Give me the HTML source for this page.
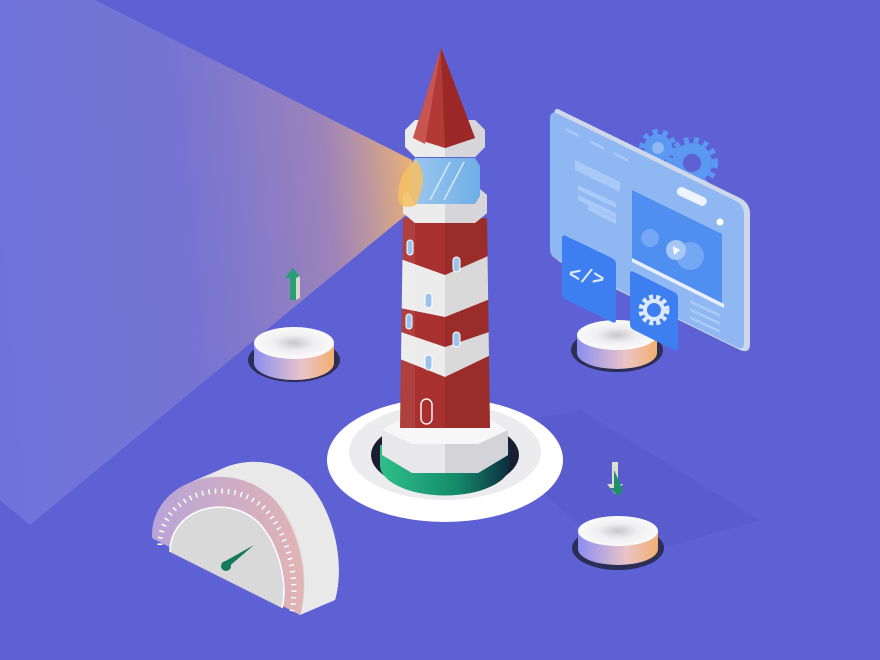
<!DOCTYPE html>
<html><head><meta charset="utf-8"><style>
html,body{margin:0;padding:0;background:#5d61d3;}
svg{display:block}
</style></head><body>
<svg width="880" height="660" viewBox="0 0 880 660" xmlns="http://www.w3.org/2000/svg">
<defs>
<linearGradient id="beam" x1="410" y1="185" x2="0" y2="220" gradientUnits="userSpaceOnUse">
<stop offset="0" stop-color="#f4b870" stop-opacity="0.9"/>
<stop offset="0.2" stop-color="#c89aa8" stop-opacity="0.6"/>
<stop offset="0.55" stop-color="#9c90d0" stop-opacity="0.4"/>
<stop offset="1" stop-color="#9a9ce8" stop-opacity="0.3"/>
</linearGradient>
<linearGradient id="btnside" x1="0" x2="1">
<stop offset="0" stop-color="#8a8ef0"/><stop offset="0.6" stop-color="#e9c4c8"/><stop offset="1" stop-color="#f3ae70"/>
</linearGradient>
<radialGradient id="btntop" cx="0.5" cy="0.5" r="0.5">
<stop offset="0" stop-color="#c8c8cc"/><stop offset="0.5" stop-color="#efeff1"/><stop offset="1" stop-color="#fafafa"/>
</radialGradient>
<linearGradient id="green" x1="0" x2="1">
<stop offset="0" stop-color="#2fbf8a"/><stop offset="0.6" stop-color="#138a68"/><stop offset="1" stop-color="#0c2b40"/>
</linearGradient>
<linearGradient id="gauge" x1="0" x2="1">
<stop offset="0" stop-color="#b8a4d8"/><stop offset="1" stop-color="#e2b4b4"/>
</linearGradient>
<linearGradient id="glass" x1="0" x2="1">
<stop offset="0" stop-color="#9cc8ef"/><stop offset="1" stop-color="#6faee6"/>
</linearGradient>
</defs>
<rect width="880" height="660" fill="#5d61d3"/>
<!-- beam -->
<polygon points="95,0 412,160 412,210 30,525 0,500 0,0" fill="url(#beam)"/>
<polygon points="470,430 580,410 760,520 620,560" fill="#5458c6" opacity="0.5"/>

<!-- left button -->
<ellipse cx="294" cy="360" rx="46" ry="22" fill="#2c2e55"/>
<path d="M254 343 v20 a40 17 0 0 0 80 0 v-20z" fill="url(#btnside)"/>
<ellipse cx="294" cy="343" rx="40" ry="16" fill="url(#btntop)"/>
<path d="M290 300 v-22 h-5 l8 -10 l8 10 h-5 v22z" fill="#2a9e78"/>
<path d="M296 300 v-22 l4 -2 v22z" fill="#d8d8c8"/>

<!-- right button (top) -->
<ellipse cx="617" cy="350" rx="46" ry="22" fill="#2c2e55"/>
<path d="M577 335 v18 a40 16 0 0 0 80 0 v-18z" fill="url(#btnside)"/>
<ellipse cx="617" cy="335" rx="40" ry="15" fill="url(#btntop)"/>

<!-- bottom right button -->
<ellipse cx="618" cy="548" rx="46" ry="22" fill="#2c2e55"/>
<path d="M578 531 v18 a40 16 0 0 0 80 0 v-18z" fill="url(#btnside)"/>
<ellipse cx="618" cy="531" rx="40" ry="15" fill="url(#btntop)"/>
<path d="M618 462 v22 h5 l-8 10 l-8 -10 h5 v-22z" fill="#dcdcd0"/>
<path d="M614 470 v18 h-4 l8 8 l5 -6 z" fill="#1f8e6a"/>

<!-- gears behind panel -->
<g fill="#5a98f2">
<circle cx="658" cy="148" r="14"/><circle cx="692" cy="163" r="20"/>
</g>
<g stroke="#5a98f2" stroke-width="6" stroke-dasharray="5 5" fill="none"><circle cx="692" cy="163" r="23"/><circle cx="658" cy="148" r="16"/></g>
<circle cx="658" cy="148" r="6" fill="#8fb8f3"/><circle cx="692" cy="163" r="9" fill="#5d61d3"/>
<!-- UI panel -->
<path d="M560 110 l180 88 q10 5 10 16 v130 q0 10 -10 6 l-180 -88 q-6 -3 -6 -12 v-134 q0 -10 6 -6z" fill="#cfd8ea"/>
<path d="M556 113 l180 88 q8 4 8 14 v128 q0 8 -8 4 l-180 -88 q-6 -3 -6 -10 v-130 q0 -8 6 -6z" fill="#8fb8f3"/>
<g fill="#a9c9f7">
<path d="M575 160 l45 22 v10 l-45 -22z"/><path d="M578 185 l38 18 v5 l-38 -18z"/><path d="M578 195 l38 18 v5 l-38 -18z"/><path d="M588 205 l28 14 v5 l-28 -14z"/>
<path d="M566 128 l12 6 v3 l-12 -6z"/><path d="M590 140 l14 7 v3 l-14 -7z"/><path d="M614 152 l14 7 v3 l-14 -7z"/>
</g>
<path d="M632 190 l90 44 v72 l-90 -44z" fill="#4f8ff0"/>
<circle cx="650" cy="238" r="9" fill="#74a7f4"/><circle cx="690" cy="256" r="14" fill="#74a7f4"/>
<circle cx="676" cy="250" r="10" fill="#a5c8f7"/><path d="M673 246 l7 4 l-6 5z" fill="#fff"/>
<path d="M632 258 l92 46 v4 l-92 -46z" fill="#e8f0fc"/>
<rect x="676" y="192" width="32" height="9" rx="4.5" fill="#eef4fe" transform="rotate(25 692 196)"/>
<circle cx="720" cy="222" r="3.5" fill="#fff"/>
<g fill="#a9c9f7"><path d="M690 300 l30 14 v3 l-30 -14z"/><path d="M690 308 l30 14 v3 l-30 -14z"/><path d="M690 316 l30 14 v3 l-30 -14z"/></g>
<path d="M566 236 l46 22 q4 2 4 6 v56 q0 4 -4 2 l-46 -22 q-4 -2 -4 -6 v-56 q0 -4 4 -2z" fill="#3d7ff0"/>
<text x="568" y="283" font-family="Liberation Mono, monospace" font-size="20" font-weight="bold" fill="#dde9fd" transform="rotate(10 588 280)">&lt;/&gt;</text>
<path d="M634 272 l40 20 q4 2 4 6 v50 q0 4 -4 2 l-40 -20 q-4 -2 -4 -6 v-50 q0 -4 4 -2z" fill="#3d7ff0"/>
<circle cx="654" cy="310" r="13" fill="none" stroke="#dde9fd" stroke-width="5" stroke-dasharray="4 3"/>
<circle cx="654" cy="310" r="9" fill="none" stroke="#dde9fd" stroke-width="4"/>

<!-- lighthouse base disc -->
<ellipse cx="445" cy="460" rx="118" ry="62" fill="#ffffff"/>
<ellipse cx="445" cy="452" rx="96" ry="48" fill="#ececef"/>
<ellipse cx="445" cy="455" rx="74" ry="36" fill="#1b1d33"/>
<path d="M380 445 v20 a64 30 0 0 0 130 0 v-20z" fill="url(#green)"/>
<path d="M382 430 l30 -18 h66 l30 18 v25 l-30 18 h-66 l-30 -18z" fill="#e8e8ea"/>
<path d="M445 412 h33 l30 18 v25 l-30 18 h-33z" fill="#d4d4d8"/>
<path d="M382 430 l30 -18 h66 l30 18 l-30 14 h-66z" fill="#f7f7f7"/>
<!-- tower -->
<clipPath id="tw"><path d="M403 218 h84 l3 210 h-90z"/></clipPath>
<g clip-path="url(#tw)">
<rect x="395" y="215" width="100" height="220" fill="#a8302e"/>
<path d="M395 257 L445 275 L495 253 V297 L445 317 L395 307z" fill="#ececec"/>
<path d="M395 330 L445 347 L495 330 V353 L445 377 L395 357z" fill="#ececec"/>
<rect x="445" y="215" width="50" height="220" fill="#000" opacity="0.08"/>
<rect x="395" y="215" width="20" height="220" fill="#fff" opacity="0.08"/>
</g>
<g fill="#9cc3ee" stroke="#fff" stroke-width="1">
<rect x="407" y="240" width="6" height="15" rx="3"/><rect x="453" y="257" width="7" height="15" rx="3.5"/>
<rect x="425" y="293" width="7" height="15" rx="3.5"/><rect x="406" y="314" width="6" height="15" rx="3"/>
<rect x="453" y="332" width="7" height="15" rx="3.5"/><rect x="425" y="355" width="7" height="15" rx="3.5"/>
</g>
<rect x="421" y="399" width="11" height="25" rx="5.5" fill="#a8302e" stroke="#f2f2f2" stroke-width="1.5"/>
<!-- gallery -->
<path d="M403 195 l12 -10 h60 l12 10 v18 l-12 10 h-60 l-12 -10z" fill="#ececec"/>
<path d="M445 185 h30 l12 10 v18 l-12 10 h-30z" fill="#d6d6da"/>
<path d="M415 158 h60 l5 8 v30 l-5 8 h-60 l-5 -8 v-30z" fill="url(#glass)"/>
<path d="M430 200 l20 -38 M444 200 l20 -38" stroke="#d4e8fb" stroke-width="1.5"/>
<path d="M416 160 q14 15 0 45 q-14 6 -18 -6 q0 -28 18 -39z" fill="#f6bf62" opacity="0.85"/>
<path d="M405 130 l10 -10 h60 l10 10 v17 l-10 10 h-60 l-10 -10z" fill="#ececec"/>
<path d="M445 120 h30 l10 10 v17 l-10 10 h-30z" fill="#d6d6da"/>
<path d="M441 48 l-28 90 l32 10 l30 -10 z" fill="#b23a36"/>
<path d="M441 48 l4 100 l30 -10z" fill="#9b2826"/>
<path d="M441 48 l-28 90 l12 6z" fill="#c95550"/>

<!-- gauge: extrusion -->
<g fill="#dedede">
<path d="M187 523 C185 465 265 440 310 485 C335 515 345 565 335 600 Z"/>
<path d="M180 526 C178 468 258 443 303 488 C328 518 338 568 328 603 Z"/>
<path d="M173 529 C171 471 251 446 296 491 C321 521 331 571 321 606 Z"/>
<path d="M166 532 C164 474 244 449 289 494 C314 524 324 574 314 609 Z"/>
<path d="M159 535 C157 477 237 452 282 497 C307 527 317 577 307 612 Z"/>
</g>
<path d="M187 523 C185 465 265 440 310 485 C335 515 345 565 335 600 L300 615 C312 575 300 525 275 500 C240 465 190 470 187 523Z" fill="#e9e9e9"/>
<!-- face -->
<path d="M152 538 C150 480 230 455 275 500 C300 530 310 580 300 615 Z" fill="url(#gauge)"/>
<path d="M170 552 C170 510 225 492 258 522 C280 545 288 585 282 608 Z" fill="#d9d9d9"/>
<path d="M170 552 C170 510 225 492 258 522 C280 545 288 585 282 608" fill="none" stroke="#fff" stroke-width="1.5"/>
<path d="M160 545 C160 495 228 472 266 510 C290 537 298 580 292 612" fill="none" stroke="#fff" stroke-width="5" stroke-dasharray="1.5 5"/>
<path d="M222 563 l32 -18 l-28 24z" fill="#137a5a"/>
<circle cx="226" cy="566" r="5" fill="#137a5a"/>
</svg>
</body></html>
